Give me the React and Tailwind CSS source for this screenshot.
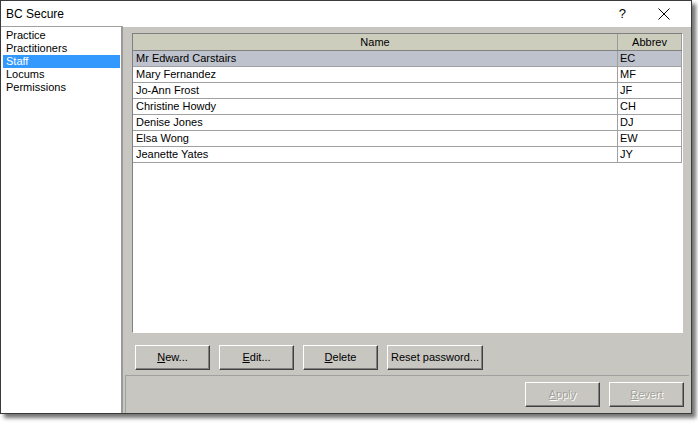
import { useState } from 'react'

const navItems = ['Practice', 'Practitioners', 'Staff', 'Locums', 'Permissions']

const staff = [
  { name: 'Mr Edward Carstairs', abbrev: 'EC' },
  { name: 'Mary Fernandez', abbrev: 'MF' },
  { name: 'Jo-Ann Frost', abbrev: 'JF' },
  { name: 'Christine Howdy', abbrev: 'CH' },
  { name: 'Denise Jones', abbrev: 'DJ' },
  { name: 'Elsa Wong', abbrev: 'EW' },
  { name: 'Jeanette Yates', abbrev: 'JY' },
]

const font = { fontFamily: '"Liberation Sans", Arial, sans-serif' }

const WinButton = ({ children, width = 'w-[75px]', disabled = false }) => (
  <button
    className={`${width} h-[25px] border border-t-white border-l-white border-r-[#404040] border-b-[#404040] bg-[#c8c6c0] shadow-[inset_-1px_-1px_0_#808080] text-[11px] leading-none ${
      disabled ? 'text-[#a3a29d] [text-shadow:1px_1px_0_#fff]' : 'text-black'
    }`}
  >
    {children}
  </button>
)

export default function App() {
  const [selected, setSelected] = useState(0)

  return (
    <div className="w-[698px] h-[423px] bg-white" style={font}>
      <div className="w-[692px] h-[414px] flex flex-col border border-[#3a3a3a] bg-white shadow-[4px_4px_4px_rgba(0,0,0,0.55)]">
        {/* title bar */}
        <div className="h-[25px] shrink-0 flex items-center pl-[5px] bg-white">
          <span className="text-[12px] text-black">BC Secure</span>
          <span className="ml-auto text-[13px] text-black mr-[32px]">?</span>
          <svg width="12" height="12" viewBox="0 0 12 12" className="mr-[21px]">
            <path d="M0.5 0.5 L11.5 11.5 M11.5 0.5 L0.5 11.5" stroke="#000" strokeWidth="1" fill="none" />
          </svg>
        </div>

        <div className="flex flex-1 min-h-0">
          {/* left nav */}
          <div className="w-[122px] shrink-0 bg-white border-t border-t-[#a0a0a0] border-r-2 border-r-[#9a9a9a] pt-[2px] pl-[2px] pr-[1px]">
            {navItems.map((item) => (
              <div
                key={item}
                className={`h-[13px] flex items-center pl-[3px] text-[11px] leading-none ${
                  item === 'Staff' ? 'bg-[#3399ff] text-white' : 'text-black'
                }`}
              >
                {item}
              </div>
            ))}
          </div>

          {/* right area */}
          <div className="flex-1 flex flex-col bg-[#c8c6c0] border-t border-t-white">
            <div className="flex-1 flex flex-col pl-[9px] pr-[8px] pt-[6px]">
              {/* table */}
              <div className="h-[300px] border border-t-[#808080] border-l-[#808080] border-r-white border-b-white bg-white flex flex-col">
                <div className="flex h-[17px] shrink-0 bg-[#cdcdbd] border-b border-[#808080] text-[11px] text-black">
                  <div className="flex-1 flex items-center justify-center border-r border-[#9c9c9c]">Name</div>
                  <div className="w-[64px] flex items-center justify-center border-r border-[#9c9c9c]">Abbrev</div>
                </div>
                {staff.map((s, i) => (
                  <div
                    key={s.abbrev}
                    onClick={() => setSelected(i)}
                    className={`flex h-[16px] shrink-0 border-b border-[#a0a0a0] text-[11px] text-black ${
                      selected === i ? 'bg-[#bec2cc]' : 'bg-white'
                    }`}
                  >
                    <div className="flex-1 flex items-center pl-[3px] border-r border-[#a0a0a0]">{s.name}</div>
                    <div className="w-[64px] flex items-center pl-[2px] border-r border-[#a0a0a0]">{s.abbrev}</div>
                  </div>
                ))}
              </div>

              {/* action buttons */}
              <div className="flex gap-[9px] mt-[12px] pl-[3px]">
                <WinButton>
                  <span className="underline">N</span>ew...
                </WinButton>
                <WinButton>
                  <span className="underline">E</span>dit...
                </WinButton>
                <WinButton>
                  <span className="underline">D</span>elete
                </WinButton>
                <WinButton width="w-[96px]">Reset password...</WinButton>
              </div>
            </div>

            {/* lower panel */}
            <div className="h-[38px] shrink-0 ml-[2px] mr-[2px] border-t border-l border-[#a0a0a0] flex justify-end items-start pt-[6px] pr-[5px] gap-[9px]">
              <WinButton disabled>
                <span className="underline">A</span>pply
              </WinButton>
              <WinButton disabled>
                <span className="underline">R</span>evert
              </WinButton>
            </div>
          </div>
        </div>
      </div>
    </div>
  )
}
